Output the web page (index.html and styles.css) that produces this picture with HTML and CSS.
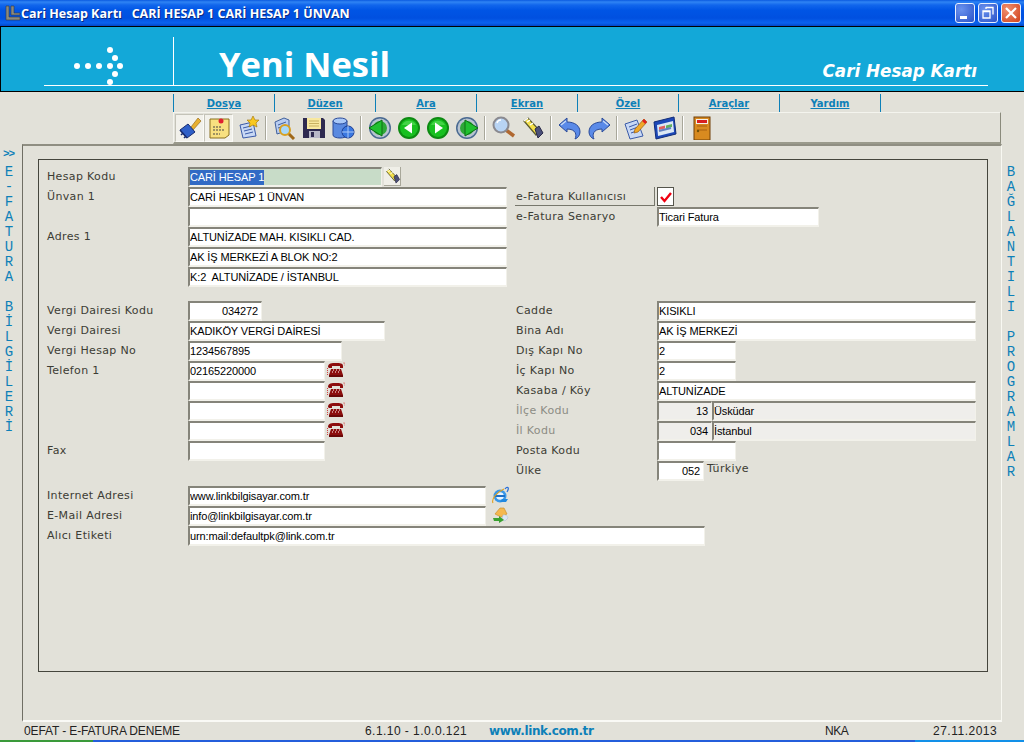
FILE: index.html
```html
<!DOCTYPE html>
<html lang="tr">
<head>
<meta charset="utf-8">
<title>Cari Hesap Kartı</title>
<link rel="stylesheet" href="styles.css">
</head>
<body>
<svg class="defs" width="0" height="0">
  <defs>
    <symbol id="torch" viewBox="0 0 24 24">
      <path d="M3 5 L7 2 L19 15 L15 19 Z" fill="#f4e04a" stroke="#5a5a30" stroke-width="1.2"/>
      <path d="M6 6 L9 4 M9 9 L12 7" stroke="#fff" stroke-width="1.4"/>
      <path d="M14 13 L18 10 L22 17 L17 22 Z" fill="#4a4f78" stroke="#2a2a48"/>
      <path d="M3 5 L7 2" stroke="#fff" stroke-width="1.5"/>
    </symbol>
    <symbol id="phone" viewBox="0 0 18 16">
      <path d="M1 5 C1 1 5 1 9 1 C13 1 16 1 16 4 L16 6 L13 6 L13 4 L5 4 L5 6 L2 6 Z" fill="#8c0d0d"/>
      <path d="M4 7 L14 7 L16 13 L2 13 Z" fill="#8c0d0d"/>
      <path d="M6 8h1M9 8h1M12 8h1M5 10h1M8 10h1M11 10h1" stroke="#fff" stroke-width="1"/>
      <rect x="2" y="13" width="14" height="2" fill="#6a0808"/>
      <path d="M0.5 6 V14 M16.5 1 h1.500 v3" stroke="#d04040" stroke-width="1" stroke-dasharray="1 1" fill="none"/>
    </symbol>
    <symbol id="gbtn" viewBox="0 0 24 24">
      <circle cx="12" cy="12" r="11" fill="#0d8a12"/>
      <circle cx="12" cy="12" r="9" fill="#18c020"/>
      <path d="M5 9 A8 8 0 0 1 19 9 Z" fill="#60e060" opacity=".6"/>
    </symbol>
    <symbol id="rbtn" viewBox="0 0 24 24">
      <circle cx="12" cy="12" r="11" fill="#4a6a92"/>
      <circle cx="12" cy="12" r="9.500" fill="#b8c4d0"/>
      <circle cx="12" cy="12" r="7" fill="#2ea838"/>
    </symbol>
  </defs>
</svg>

<header class="titlebar">
  <svg class="app-icon" width="16" height="16" viewBox="0 0 16 16">
    <path d="M1 1h3v11h11v3H1zM6 1h3v7h6v2H6z" fill="#8a8a80" stroke="#3a3a3a" stroke-width=".6"/>
  </svg>
  <span class="title-text">Cari Hesap Kartı&nbsp;&nbsp; CARİ HESAP 1 CARİ HESAP 1 ÜNVAN</span>
  <div class="win-buttons">
    <span class="win-btn">
      <svg width="20" height="20" viewBox="0 0 20 20"><rect x="5" y="13" width="7" height="3" fill="#fff"/></svg>
    </span>
    <span class="win-btn">
      <svg width="20" height="20" viewBox="0 0 20 20"><path d="M8 4.500h7v7M8 4v2M5 8h7v7H5z M5 8.500h7" fill="none" stroke="#fff" stroke-width="1.300"/></svg>
    </span>
    <span class="win-btn win-close">
      <svg width="20" height="20" viewBox="0 0 20 20"><path d="M5 5L15 15M15 5L5 15" stroke="#fff" stroke-width="2.200"/></svg>
    </span>
  </div>
</header>

<section class="banner">
  <svg class="banner-logo" width="60" height="48" viewBox="0 0 60 48">
    <g fill="#fff">
      <circle cx="4" cy="24" r="3"/><circle cx="15" cy="24" r="3"/><circle cx="26" cy="24" r="3"/><circle cx="37" cy="24" r="3"/><circle cx="47" cy="24" r="3"/>
      <circle cx="42" cy="16" r="3"/><circle cx="42" cy="32" r="3"/><circle cx="37" cy="8" r="3"/><circle cx="37" cy="40" r="3"/>
    </g>
  </svg>
  <div class="banner-title">Yeni Nesil</div>
  <div class="banner-sub">Cari Hesap Kartı</div>
</section>

<nav class="menu">
  <a class="menu-item">Dosya</a>
  <a class="menu-item">Düzen</a>
  <a class="menu-item">Ara</a>
  <a class="menu-item">Ekran</a>
  <a class="menu-item">Özel</a>
  <a class="menu-item">Araçlar</a>
  <a class="menu-item">Yardım</a>
</nav>

<div class="toolbar">
  <span class="tool tool-on"><svg width="24" height="24" viewBox="0 0 24 24">
    <path d="M13 11 L20 2 L23 5 L15 14 Z" fill="#e8b030" stroke="#8a6010" stroke-width=".6"/>
    <path d="M2 14 L10 8 L17 16 L9 22 Z" fill="#3060c8" stroke="#182c70"/>
    <path d="M2 14 L9 22 M5 17l-2 2M8 20l-2 2" stroke="#182c70" stroke-width="1.500"/>
  </svg></span>
  <span class="tool tool-on"><svg width="24" height="24" viewBox="0 0 24 24">
    <path d="M3 3 H22 V19 L18 22 H3 Z" fill="#f8e080" stroke="#8a7020"/>
    <path d="M6 11h9M6 14h12M6 18h7" stroke="#444" stroke-width="1" stroke-dasharray="2 1"/>
    <circle cx="14" cy="5" r="2.500" fill="#e02030"/>
  </svg></span>
  <span class="tool"><svg width="24" height="24" viewBox="0 0 24 24">
    <path d="M4 9 L17 6 L20 20 L7 22 Z" fill="#c8d8f4" stroke="#3a5aa8"/>
    <path d="M7 12l8-2M8 15l8-2M9 18l8-2" stroke="#3a5aa8"/>
    <path d="M17 0 L19 4 L23 4 L20 7 L21 11 L17 9 L13 11 L14 7 L11 4 L15 4 Z" fill="#f8c820" stroke="#a07000" stroke-width=".6"/>
  </svg></span>
  <i class="sep"></i>
  <span class="tool"><svg width="24" height="24" viewBox="0 0 24 24">
    <path d="M2 6 L11 2 L16 4 L16 14 L4 18 Z" fill="#b8ccf0" stroke="#40609c"/>
    <path d="M5 9l8-3M5 12l6-2" stroke="#40609c"/>
    <path d="M15 17 L21 23" stroke="#a06818" stroke-width="3"/>
    <circle cx="12" cy="14" r="5" fill="#a8d8f8" stroke="#d8a020" stroke-width="2"/>
  </svg></span>
  <span class="tool"><svg width="24" height="24" viewBox="0 0 24 24">
    <path d="M1 2 H21 L23 4 V22 H1 Z" fill="#2e2a50"/>
    <rect x="5" y="2" width="14" height="11" fill="#f8e8a0"/>
    <path d="M7 5h10M7 7.500h10M7 10h10" stroke="#c8b060"/>
    <rect x="7" y="15" width="11" height="7" fill="#b8b8c8"/>
    <rect x="9" y="16" width="3" height="5" fill="#2e2a50"/>
  </svg></span>
  <span class="tool"><svg width="24" height="24" viewBox="0 0 24 24">
    <path d="M2 5 V19 C2 23 16 23 16 19 V5 Z" fill="#5a8ae0" stroke="#2a4a98"/>
    <ellipse cx="9" cy="5" rx="7" ry="3" fill="#a8c8f8" stroke="#2a4a98"/>
    <circle cx="17" cy="16" r="6" fill="#3a78e0" stroke="#1c3c90"/>
    <path d="M11 16h12M17 10v12" stroke="#a8c8f8"/>
  </svg></span>
  <i class="sep"></i>
  <span class="tool"><svg width="24" height="24" viewBox="0 0 24 24">
    <use href="#rbtn"/><path d="M1 12 L14 4 V20 Z" fill="#20c030" stroke="#0a7010"/>
  </svg></span>
  <span class="tool"><svg width="24" height="24" viewBox="0 0 24 24">
    <use href="#gbtn"/><path d="M7 12 L15 6.500 V17.500 Z" fill="#fff"/>
  </svg></span>
  <span class="tool"><svg width="24" height="24" viewBox="0 0 24 24">
    <use href="#gbtn"/><path d="M17 12 L9 6.500 V17.500 Z" fill="#fff"/>
  </svg></span>
  <span class="tool"><svg width="24" height="24" viewBox="0 0 24 24">
    <use href="#rbtn"/><path d="M23 12 L10 4 V20 Z" fill="#20c030" stroke="#0a7010"/>
  </svg></span>
  <i class="sep"></i>
  <span class="tool"><svg width="24" height="24" viewBox="0 0 24 24">
    <path d="M14 14 L22 20" stroke="#b06830" stroke-width="3.500"/>
    <circle cx="9" cy="9" r="7.500" fill="#b8d4f4" stroke="#8a8a90" stroke-width="2"/>
    <path d="M5 7a4 4 0 0 1 4-3" stroke="#fff" stroke-width="1.500" fill="none"/>
  </svg></span>
  <span class="tool"><svg width="24" height="24"><use href="#torch"/></svg></span>
  <i class="sep"></i>
  <span class="tool"><svg width="24" height="24" viewBox="0 0 24 24">
    <path d="M1 9 L9 2 V6 C17 6 22 10 22 16 C22 19 20 22 17 23 C19 19 18 13 9 13 V16 Z" fill="#5a8ae8" stroke="#2a4a98"/>
    <path d="M3 9 L8 5" stroke="#c8dcf8" stroke-width="1.500"/>
  </svg></span>
  <span class="tool"><svg width="24" height="24" viewBox="0 0 24 24">
    <path d="M23 9 L15 2 V6 C7 6 2 10 2 16 C2 19 4 22 7 23 C5 19 6 13 15 13 V16 Z" fill="#5a8ae8" stroke="#2a4a98"/>
    <path d="M21 9 L16 5" stroke="#c8dcf8" stroke-width="1.500"/>
  </svg></span>
  <i class="sep"></i>
  <span class="tool"><svg width="24" height="24" viewBox="0 0 24 24">
    <path d="M1 8 L13 4 L19 20 L6 23 Z" fill="#c8d8f4" stroke="#3a5aa8"/>
    <path d="M5 11l8-3M6 14l8-3M7 17l8-3" stroke="#3a5aa8"/>
    <path d="M11 13 L20 3 L23 6 L14 16 L10 17 Z" fill="#f0a828" stroke="#985c10" stroke-width=".7"/>
    <path d="M19 4l3 3" stroke="#e02020" stroke-width="2.500"/>
  </svg></span>
  <span class="tool"><svg width="24" height="24" viewBox="0 0 24 24">
    <path d="M1 6 L21 1 L23 18 L3 23 Z" fill="#1c48b8" stroke="#102c78"/>
    <path d="M4 9 L20 5 L21 16 L5 20 Z" fill="#dce8f4"/>
    <path d="M6 11l6-1.500v3l-6 1.500z" fill="#e06060"/>
    <path d="M13 9.500l6-1.500v3l-6 1.500z" fill="#60b060"/>
    <path d="M6 15l12-3" stroke="#6080c0" stroke-width="2"/>
  </svg></span>
  <i class="sep"></i>
  <span class="tool"><svg width="24" height="24" viewBox="0 0 24 24">
    <rect x="4" y="1" width="16" height="23" fill="#d88a20" stroke="#704008"/>
    <rect x="6" y="3" width="12" height="5" fill="#f4f0e8"/>
    <rect x="7" y="4" width="10" height="3" fill="#d82020"/>
    <path d="M7 10h10M7 14h10" stroke="#a86010"/>
    <circle cx="8" cy="15" r="1.200" fill="#705008"/>
  </svg></span>
</div>

<main class="workspace">
  <aside class="rail rail-left">
    <div class="rail-top">&gt;&gt;</div>
    <div class="rail-word">E<br>-<br>F<br>A<br>T<br>U<br>R<br>A<br>&nbsp;<br>B<br>İ<br>L<br>G<br>İ<br>L<br>E<br>R<br>İ</div>
  </aside>

  <div class="frame">
    <div class="panel">
      <div class="form-top">
        <div class="col col-left">
          <div class="row"><label class="lbl">Hesap Kodu</label><div class="fld w-hesap fld-green"><span class="selected">CARİ HESAP 1</span></div><span class="lookup"><svg width="17" height="18"><use href="#torch"/></svg></span></div>
          <div class="row"><label class="lbl">Ünvan 1</label><div class="fld w-long">CARİ HESAP 1 ÜNVAN</div></div>
          <div class="row"><label class="lbl"></label><div class="fld w-long"></div></div>
          <div class="row"><label class="lbl">Adres 1</label><div class="fld w-long">ALTUNİZADE MAH. KISIKLI CAD.</div></div>
          <div class="row"><label class="lbl"></label><div class="fld w-long">AK İŞ MERKEZİ A BLOK NO:2</div></div>
          <div class="row"><label class="lbl"></label><div class="fld w-long">K:2&nbsp; ALTUNİZADE / İSTANBUL</div></div>
        </div>
        <div class="col col-right col-shift">
          <div class="row"><label class="lbl lbl-boxed">e-Fatura Kullanıcısı</label>
            <span class="check"><svg width="14" height="14" viewBox="0 0 14 14"><path d="M2 7 L5.500 11 L12 3" fill="none" stroke="#f00010" stroke-width="2.400"/></svg></span></div>
          <div class="row"><label class="lbl">e-Fatura Senaryo</label><div class="fld w-senaryo">Ticari Fatura</div></div>
        </div>
      </div>

      <div class="form-mid">
        <div class="col col-left">
          <div class="row"><label class="lbl">Vergi Dairesi Kodu</label><div class="fld w-kod num">034272</div></div>
          <div class="row"><label class="lbl">Vergi Dairesi</label><div class="fld w-vd">KADIKÖY VERGİ DAİRESİ</div></div>
          <div class="row"><label class="lbl">Vergi Hesap No</label><div class="fld w-vhn">1234567895</div></div>
          <div class="row"><label class="lbl">Telefon 1</label><div class="fld w-tel">02165220000</div><span class="ph"><svg width="18" height="16"><use href="#phone"/></svg></span></div>
          <div class="row"><label class="lbl"></label><div class="fld w-tel"></div><span class="ph"><svg width="18" height="16"><use href="#phone"/></svg></span></div>
          <div class="row"><label class="lbl"></label><div class="fld w-tel"></div><span class="ph"><svg width="18" height="16"><use href="#phone"/></svg></span></div>
          <div class="row"><label class="lbl"></label><div class="fld w-tel"></div><span class="ph"><svg width="18" height="16"><use href="#phone"/></svg></span></div>
          <div class="row"><label class="lbl">Fax</label><div class="fld w-tel"></div></div>
        </div>
        <div class="col col-right">
          <div class="row"><label class="lbl">Cadde</label><div class="fld w-cadde">KISIKLI</div></div>
          <div class="row"><label class="lbl">Bina Adı</label><div class="fld w-cadde">AK İŞ MERKEZİ</div></div>
          <div class="row"><label class="lbl">Dış Kapı No</label><div class="fld w-kapi">2</div></div>
          <div class="row"><label class="lbl">İç Kapı No</label><div class="fld w-kapi">2</div></div>
          <div class="row"><label class="lbl">Kasaba / Köy</label><div class="fld w-cadde">ALTUNİZADE</div></div>
          <div class="row"><label class="lbl lbl-off">İlçe Kodu</label><div class="fld fld-off w-code num">13</div><div class="fld fld-off w-name">Üsküdar</div></div>
          <div class="row"><label class="lbl lbl-off">İl Kodu</label><div class="fld fld-off w-code num">034</div><div class="fld fld-off w-name">İstanbul</div></div>
          <div class="row"><label class="lbl">Posta Kodu</label><div class="fld w-kapi"></div></div>
          <div class="row"><label class="lbl">Ülke</label><div class="fld w-ulke num">052</div><span class="after">Türkiye</span></div>
        </div>
      </div>

      <div class="form-bottom">
        <div class="row"><label class="lbl">Internet Adresi</label><div class="fld w-web">www.linkbilgisayar.com.tr</div>
          <span class="net"><svg width="17" height="18" viewBox="0 0 17 18">
            <path d="M13 3 C15 0 18 1 15 6" fill="none" stroke="#2a70d8" stroke-width="1.300"/>
            <circle cx="8" cy="10" r="6.500" fill="#3a98e8"/>
            <circle cx="8" cy="10" r="3.800" fill="#e8f4ff"/>
            <rect x="3" y="9" width="10" height="2" fill="#1c70c8"/>
            <path d="M10 13 h6 l-2 3 h-6z" fill="#2088e0"/>
            <path d="M1 17 C-1 13 5 6 12 3" fill="none" stroke="#e0a020" stroke-width="1.100"/>
          </svg></span></div>
        <div class="row"><label class="lbl">E-Mail Adresi</label><div class="fld w-web">info@linkbilgisayar.com.tr</div>
          <span class="net"><svg width="17" height="18" viewBox="0 0 17 18">
            <path d="M3 8 L8 2 L12 2 L15 8 L9 11 Z" fill="#f4b850" stroke="#c88820" stroke-width=".6"/>
            <path d="M11 9 a4 4 0 0 1 5 3 l-3 3 l-3 -2z" fill="#dbe6f4" stroke="#a8b8d0" stroke-width=".5"/>
            <path d="M1 12 L7 12 L7 10 L12 14 L7 17 L7 15 L2 15Z" fill="#38a030"/>
          </svg></span></div>
        <div class="row"><label class="lbl">Alıcı Etiketi</label><div class="fld w-alici">urn:mail:defaultpk@link.com.tr</div></div>
      </div>
    </div>
  </div>

  <aside class="rail rail-right">
    <div class="rail-word">B<br>A<br>Ğ<br>L<br>A<br>N<br>T<br>I<br>L<br>I<br>&nbsp;<br>P<br>R<br>O<br>G<br>R<br>A<br>M<br>L<br>A<br>R</div>
  </aside>
</main>

<footer class="status">
  <span class="st st-company">0EFAT - E-FATURA DENEME</span>
  <span class="st st-version">6.1.10 - 1.0.0.121</span>
  <span class="st st-link">www.link.com.tr</span>
  <span class="st st-user">NKA</span>
  <span class="st st-date">27.11.2013</span>
</footer>
<div class="taskbar"><span class="start"></span><span class="tray"></span></div>
</body>
</html>
```
FILE: styles.css
```css
* { box-sizing: border-box; }
html, body { margin: 0; padding: 0; }
body {
  width: 1024px;
  height: 742px;
  overflow: hidden;
  display: flex;
  flex-direction: column;
  background: #e2e1d9;
  font-family: "Liberation Sans", sans-serif;
  color: #000;
}
.defs { position: absolute; }

/* title bar */
.titlebar {
  height: 26px;
  flex: none;
  display: flex;
  align-items: center;
  padding: 0 3px 0 5px;
  background: linear-gradient(#0a5ae0 0, #2f84f4 2px, #1166ec 5px, #0055e5 10px, #0050e0 18px, #0a62ee 23px, #0046c8 26px);
}
.app-icon { flex: none; }
.title-text {
  font: bold 12.5px "Open Sans", sans-serif;
  color: #fff;
  text-shadow: 1px 1px 0 #0a2a80;
  white-space: pre;
}
.win-buttons { margin-left: auto; display: flex; gap: 3px; }
.win-btn {
  width: 20px;
  height: 20px;
  border: 1px solid #e8f0ff;
  border-radius: 3px;
  overflow: hidden;
  background: radial-gradient(circle at 30% 30%, #6a92ee, #2a52c8);
  display: block;
}
.win-btn svg { display: block; margin: -1px; }
.win-close { background: radial-gradient(circle at 30% 30%, #f09070, #d0401a); }

/* banner */
.banner {
  position: relative;
  height: 66px;
  flex: none;
  background: #13a8d8;
  border-top: 1px solid #000;
  border-bottom: 1px solid #000;
  border-left: 1px solid #000;
  color: #fff;
}
.banner::before {
  content: "";
  position: absolute;
  left: 43px;
  right: 36px;
  top: 58px;
  border-top: 1px solid #fff;
}
.banner::after {
  content: "";
  position: absolute;
  left: 172px;
  top: 10px;
  height: 48px;
  border-left: 1px solid #fff;
}
.banner-logo { position: absolute; left: 72px; top: 15px; }
.banner-title {
  position: absolute;
  left: 218px;
  top: 13px;
  font: 700 34.600px/48px "Open Sans", sans-serif;
  white-space: nowrap;
}
.banner-sub {
  position: absolute;
  right: 47px;
  top: 33px;
  font: italic bold 16.800px/22px "DejaVu Sans", sans-serif;
  white-space: nowrap;
}

/* menu */
.menu {
  flex: none;
  display: flex;
  height: 18px;
  margin: 2px 0 0 173px;
  width: 708px;
  border-right: 1px solid #0d80b8;
}
.menu-item {
  width: 101px;
  border-left: 1px solid #0d80b8;
  font: bold 10px/20px "DejaVu Sans", sans-serif;
  color: #0d80b8;
  text-decoration: underline;
  text-align: center;
}

/* toolbar */
.toolbar {
  flex: none;
  display: flex;
  align-items: center;
  height: 32px;
  width: 828px;
  margin-left: 173px;
  padding: 1px 0 0 1px;
  border-top: 1px solid #f4f4ee;
  border-left: 1px solid #f4f4ee;
  border-right: 1px solid #8a8a7c;
  border-bottom: 2px solid #9a9a8c;
}
.tool {
  width: 29px;
  height: 28px;
  flex: none;
  display: flex;
  align-items: center;
  justify-content: center;
}
.tool-on {
  background: #f2f1eb;
  border: 1px solid #fbfbf7;
  border-top-color: #c4c3b8;
  border-left-color: #c4c3b8;
}
.sep {
  width: 2px;
  height: 24px;
  margin: 0 3px;
  flex: none;
  background: #a8a79a;
  border-right: 1px solid #fff;
}

/* workspace */
.workspace { flex: none; display: flex; height: 579px; }
.rail { flex: none; width: 22px; position: relative; }
.rail-top {
  position: absolute;
  top: 3px;
  left: 3px;
  font: bold 11px/14px "Liberation Mono", monospace;
  letter-spacing: -1px;
  color: #0d80b8;
}
.rail-word {
  position: absolute;
  top: 21px;
  left: -2px;
  width: 100%;
  text-align: center;
  font: 14px/15px "Liberation Mono", monospace;
  color: #0d80b8;
}

.frame {
  flex: none;
  width: 980px;
  height: 578px;
  padding: 13px 13px 49px 15px;
  border-top: 2px solid #8f8e82;
  border-left: 1px solid #6f6e64;
  border-right: 1px solid #f8f8f2;
  border-bottom: 2px solid #fafaf6;
}
.panel {
  height: 513px;
  padding: 7px 0 0 8px;
  border: 1px solid #45453d;
}

/* form */
.form-top, .form-mid { display: flex; }
.form-mid { margin-top: 14px; }
.form-bottom { margin-top: 5px; }
.col-left { width: 469px; }
.col-shift { padding-top: 20px; }
.row { display: flex; height: 20px; }
.lbl {
  width: 141px;
  flex: none;
  font: 11px/20px "DejaVu Sans", sans-serif;
  letter-spacing: .35px;
  color: #3c3c34;
  white-space: nowrap;
}
.lbl-off { color: #8c8c84; }
.lbl-boxed {
  margin-left: -1px;
  padding-left: 1px;
  height: 19px;
  width: 140px;
  margin-right: 2px;
  border-bottom: 1px solid #77776c;
  border-right: 1px solid #77776c;
}
.fld {
  height: 20px;
  flex: none;
  padding: 0 1px 0 0;
  font: 11px/17px "Liberation Sans", sans-serif;
  letter-spacing: -.12px;
  white-space: nowrap;
  background: #fff;
  border-top: 2px solid #85847a;
  border-left: 2px solid #85847a;
  border-right: 1px solid #f2f1ea;
  border-bottom: 2px solid #f2f1ea;
  overflow: hidden;
}
.fld-green { background: #c8dcc8; }
.selected { display: inline-block; background: #316ac5; color: #fff; line-height: 15px; }
.fld-off { background: #efeeeb; }
.num { text-align: right; padding-right: 3px; }

.w-hesap { width: 194px; }
.w-long { width: 319px; }
.w-senaryo { width: 162px; }
.w-kod { width: 74px; }
.w-vd { width: 197px; }
.w-vhn { width: 154px; }
.w-tel { width: 137px; }
.w-web { width: 298px; }
.w-alici { width: 517px; }
.w-cadde { width: 319px; }
.w-kapi { width: 79px; }
.w-code { width: 55px; }
.w-name { width: 264px; }
.w-ulke { width: 47px; }

.lookup {
  width: 17px;
  height: 19px;
  margin-left: 2px;
  background: #f0efe8;
  border-right: 1px solid #a8a79a;
  border-bottom: 1px solid #a8a79a;
}
.lookup svg { display: block; }
.ph { margin: 1px 0 0 2px; }
.ph svg, .net svg { display: block; }
.net { margin: 0 0 0 6px; }
.check {
  width: 17px;
  height: 19px;
  background: #fff;
  border: 1px solid #55554c;
  display: flex;
  align-items: center;
  justify-content: center;
}
.after {
  margin-left: 3px;
  font: 11px/16px "DejaVu Sans", sans-serif;
  letter-spacing: .35px;
  color: #3c3c34;
}

/* status */
.status {
  flex: none;
  height: 16px;
  margin-top: 1px;
  display: flex;
  font: 12px/14px "Liberation Sans", sans-serif;
  color: #222;
  white-space: nowrap;
}
.st-company { margin-left: 24px; width: 341px; letter-spacing: -.12px; }
.st-version { width: 124px; letter-spacing: .45px; }
.st-link { width: 336px; font: bold 12px/15px "DejaVu Sans", sans-serif; color: #0d80b8; letter-spacing: -.4px; }
.st-user { width: 108px; letter-spacing: -.5px; }
.st-date { width: 70px; letter-spacing: .5px; }

.taskbar {
  flex: none;
  height: 4px;
  display: flex;
  justify-content: space-between;
  background: #245edb;
}
.start { width: 93px; background: #3a9a3a; }
.tray { width: 109px; background: #1290e8; }
```
